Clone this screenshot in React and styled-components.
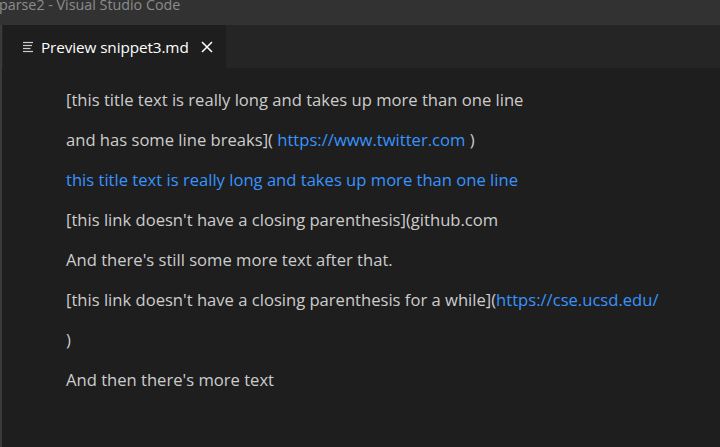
import React from 'react'
import styled, { createGlobalStyle } from 'styled-components'

const GlobalStyle = createGlobalStyle`
  html, body {
    margin: 0;
    padding: 0;
    background: #1e1e1e;
    overflow: hidden;
  }
`

const Window = styled.div`
  width: 720px;
  height: 447px;
  display: flex;
  flex-direction: column;
  background: #1e1e1e;
  font-family: 'Open Sans', 'Noto Sans', sans-serif;
  overflow: hidden;
`

const TitleBar = styled.div`
  height: 25px;
  flex: none;
  background: #323233;
  color: #8c8c8c;
  font-size: 14.3px;
  line-height: 9px;
  margin-left: -1px;
  overflow: hidden;
  white-space: nowrap;
`

const Body = styled.div`
  flex: 1;
  display: flex;
  flex-direction: column;
  border-left: 2px solid #3a3a3a;
  min-height: 0;
`

const TabBar = styled.div`
  height: 43px;
  flex: none;
  display: flex;
  background: #252526;
`

const Tab = styled.div`
  display: flex;
  align-items: center;
  width: 223px;
  margin-left: 1px;
  background: #1e1e1e;
  color: #ffffff;
  font-size: 15.3px;
  box-sizing: border-box;
  padding-left: 19px;
`

const TabIcon = styled.svg`
  width: 12px;
  height: 12px;
  margin-right: 7px;
  flex: none;
`

const TabLabel = styled.span`
  letter-spacing: -0.1px;
`

const CloseIcon = styled.svg`
  width: 12px;
  height: 12px;
  margin-left: 12px;
  flex: none;
`

const Preview = styled.div`
  flex: 1;
  padding: 12px 0 0 64px;
  color: #cccccc;
  font-size: 16.6px;
`

const Line = styled.p`
  margin: 0;
  height: 40px;
  line-height: 40px;
  white-space: nowrap;
`

const Anchor = styled.a`
  color: #3794ff;
  text-decoration: none;
`

export default function App() {
  return (
    <>
      <GlobalStyle />
      <Window>
        <TitleBar>parse2 - Visual Studio Code</TitleBar>
        <Body>
          <TabBar>
            <Tab>
              <TabIcon viewBox="0 0 12 12">
                <g stroke="#cccccc" strokeWidth="1.2">
                  <line x1="1" y1="1.5" x2="11" y2="1.5" />
                  <line x1="1" y1="4.5" x2="10" y2="4.5" />
                  <line x1="1" y1="7.5" x2="8.5" y2="7.5" />
                  <line x1="1" y1="10.5" x2="11" y2="10.5" />
                </g>
              </TabIcon>
              <TabLabel>Preview snippet3.md</TabLabel>
              <CloseIcon viewBox="0 0 12 12">
                <path d="M1 1 L11 11 M11 1 L1 11" stroke="#ffffff" strokeWidth="1.5" />
              </CloseIcon>
            </Tab>
          </TabBar>
          <Preview>
            <Line>[this title text is really long and takes up more than one line</Line>
            <Line>
              and has some line breaks]( <Anchor href="#">https://www.twitter.com</Anchor> )
            </Line>
            <Line>
              <Anchor href="#">this title text is really long and takes up more than one line</Anchor>
            </Line>
            <Line>[this link doesn't have a closing parenthesis](github.com</Line>
            <Line>And there's still some more text after that.</Line>
            <Line>
              [this link doesn't have a closing parenthesis for a while](<Anchor href="#">https://cse.ucsd.edu/</Anchor>
            </Line>
            <Line>)</Line>
            <Line>And then there's more text</Line>
          </Preview>
        </Body>
      </Window>
    </>
  )
}
